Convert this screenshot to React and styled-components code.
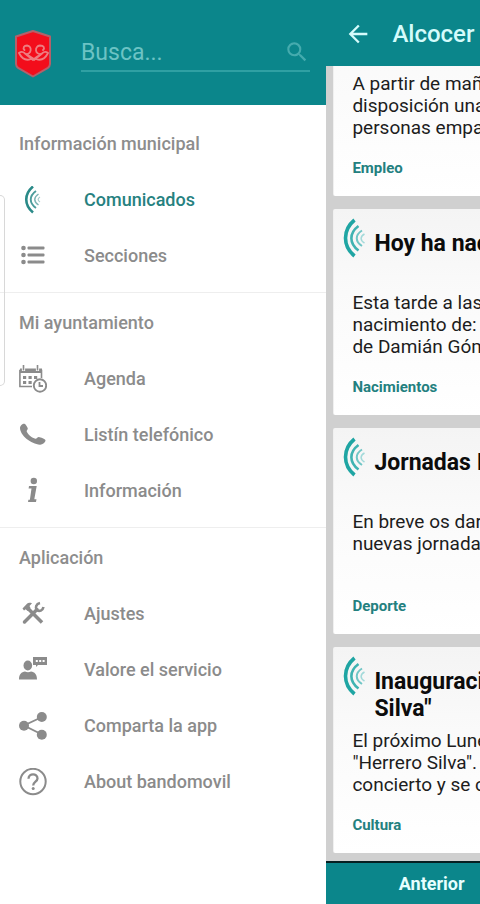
import React, { useState } from "react";
import styled, { createGlobalStyle, css } from "styled-components";
import { MdArrowBack, MdSearch } from "react-icons/md";

const TEAL = "#0b868b";

const menu = [
  {
    title: "Información municipal",
    items: [
      { label: "Comunicados", icon: MenuSignalIcon },
      { label: "Secciones", icon: ListIcon },
    ],
  },
  {
    title: "Mi ayuntamiento",
    items: [
      { label: "Agenda", icon: CalendarIcon },
      { label: "Listín telefónico", icon: PhoneIcon },
      { label: "Información", icon: InfoIcon },
    ],
  },
  {
    title: "Aplicación",
    items: [
      { label: "Ajustes", icon: ToolsIcon },
      { label: "Valore el servicio", icon: FeedbackIcon },
      { label: "Comparta la app", icon: ShareIcon },
      { label: "About bandomovil", icon: HelpIcon },
    ],
  },
];

const posts = [
  {
    body: "A partir de mañana\ndisposición una\npersonas empadronadas",
    tag: "Empleo",
  },
  {
    title: "Hoy ha nacido",
    body: "Esta tarde a las\nnacimiento de:\nde Damián Gómez",
    tag: "Nacimientos",
  },
  {
    title: "Jornadas Infantiles",
    body: "En breve os daremos\nnuevas jornadas",
    tag: "Deporte",
  },
  {
    title: 'Inauguración\nSilva"',
    body: 'El próximo Lunes\n"Herrero Silva".\nconcierto y se celebrará',
    tag: "Cultura",
  },
];

export default function App() {
  const [active, setActive] = useState("Comunicados");
  const [search, setSearch] = useState("");

  return (
    <Screen>
      <GlobalStyle />
      <Drawer>
        <DrawerHeader>
          <CrestIcon />
          <SearchField>
            <input
              type="text"
              aria-label="Busca"
              placeholder="Busca..."
              value={search}
              onChange={(e) => setSearch(e.target.value)}
            />
            <MdSearch size={26} />
          </SearchField>
        </DrawerHeader>
        <Menu>
          {menu.map((section) => (
            <Section key={section.title}>
              <SectionTitle>{section.title}</SectionTitle>
              {section.items.map(({ label, icon: Icon }) => (
                <MenuItem
                  key={label}
                  type="button"
                  $active={label === active}
                  onClick={() => setActive(label)}
                >
                  <Icon />
                  <MenuLabel>{label}</MenuLabel>
                </MenuItem>
              ))}
            </Section>
          ))}
        </Menu>
        <EdgeHandle />
      </Drawer>
      <Content>
        <AppBar>
          <BackButton type="button" aria-label="Volver">
            <MdArrowBack size={28} />
          </BackButton>
          <h1>Alcocer</h1>
        </AppBar>
        <Feed>
          {posts.map((post) => (
            <Card key={post.tag}>
              <CardHeader>
                {post.title && (
                  <>
                    <SignalIcon />
                    <h2>{post.title}</h2>
                  </>
                )}
              </CardHeader>
              <CardBody>{post.body}</CardBody>
              <Tag>{post.tag}</Tag>
            </Card>
          ))}
        </Feed>
        <Pager>
          <button type="button">Anterior</button>
        </Pager>
      </Content>
    </Screen>
  );
}

function CrestIcon() {
  return (
    <svg width="38" height="50" viewBox="0 0 38 50" fill="none">
      <path
        d="M19 3 36 8.500V36c0 2-1 3-2.500 4.200L19 48.500 4.500 40.200C3 39 2 38 2 36V8.500z"
        fill="#f30d1b"
        stroke="#b5606a"
        strokeWidth="2"
        strokeLinejoin="round"
      />
      <g stroke="#ee7c80" strokeWidth="1.800" strokeLinecap="round">
        <path d="M20 31C17 29 14 27 12 26C17 27 19 18 13 17.500C10 17.500 8.500 20 10.500 22" />
        <path d="M20 31C23 29 26 27 27 26C21 27 20 18 26 17.500C30 17.500 31 20 29 22" />
        <path d="M17 31C12 33 8 31 5 25C7 23.500 9.500 24 11 25.500L19 32" />
        <path d="M22 31C27 33 31 31 34 25C32 23.500 29.500 24 28 25.500L20 32" />
      </g>
    </svg>
  );
}

function SignalIcon() {
  return (
    <svg width="24" height="40" viewBox="0 0 24 40" fill="none">
      <path d="M12.500 2C.500 12 .500 28 12.500 38" stroke="#1fa5a3" strokeWidth="3.600" />
      <path d="M16.500 8C7 15 7 25.500 16.500 32.500" stroke="#3fb3b2" strokeWidth="2.600" />
      <path d="M20 12.500C13 17 13 23.500 20 28" stroke="#70c6c6" strokeWidth="2" />
      <path d="M22.500 16C18 18.500 18 22.500 22.500 25" stroke="#a3dada" strokeWidth="1.500" />
    </svg>
  );
}

function MenuSignalIcon() {
  return (
    <svg width="28" height="28" viewBox="0 0 28 28" fill="none">
      <path d="M14 .500C5 8 5 19 14 26.500" stroke="#2a8a88" strokeWidth="2.600" />
      <path d="M17 5C10 10 10 17 17 22" stroke="#4b9c9b" strokeWidth="1.900" />
      <path d="M19.500 8C14.500 11.500 14.500 15.500 19.500 19" stroke="#7fb5b5" strokeWidth="1.500" />
      <path d="M21 11C18.500 12.500 18.500 14.500 21 16" stroke="#a9cccc" strokeWidth="1.200" />
    </svg>
  );
}

function ListIcon() {
  return (
    <svg width="28" height="28" viewBox="0 0 28 28" fill="currentColor">
      {[6, 13, 20].map((y) => (
        <g key={y}>
          <circle cx="4.500" cy={y} r="2.300" />
          <rect x="8.500" y={y - 1.5} width="17" height="3" rx="1" />
        </g>
      ))}
    </svg>
  );
}

function CalendarIcon() {
  return (
    <svg width="28" height="28" viewBox="0 0 28 28" fill="none" stroke="currentColor">
      <path d="M13 21.500H.900V5.500H22.500V13" strokeWidth="1.600" />
      <path d="M1 3.500h22V8H1z" fill="currentColor" stroke="none" />
      <path d="M4.500 0v6M18.500 0v6" stroke="#fff" strokeWidth="3.200" />
      <path d="M4.500 0v5.500M18.500 0v5.500" strokeWidth="1.600" />
      <path
        d="M4 11h3.200v3H4zM9.500 11h3.200v3H9.500zM15 11h3.200v3H15zM4 16h3.200v3H4zM9.500 16h3.200v3H9.500z"
        fill="currentColor"
        stroke="none"
      />
      <circle cx="21" cy="20.500" r="6.200" fill="#fff" strokeWidth="1.900" />
      <path d="M20.500 17v4h3.500" strokeWidth="1.800" />
    </svg>
  );
}

function PhoneIcon() {
  return (
    <svg width="28" height="28" viewBox="0 0 28 28" fill="currentColor">
      <path d="M1 7C1 4.500 3.500 2.500 5.500 2.700C6.300 2.800 8.700 6.300 8.800 7.500C8.900 8.500 7.400 9.500 7.700 10.600C8.700 13.500 13.300 17.200 16.400 17.800C17.800 18 18.600 16 19.900 16.100C21.500 16.300 26.300 18.300 26.500 19.300C26.600 21.300 23.500 23.800 21 23.700C12 23 1.200 14.500 1 7z" />
    </svg>
  );
}

function InfoIcon() {
  return (
    <svg width="28" height="28" viewBox="0 0 28 28" fill="currentColor">
      <circle cx="14.800" cy="4" r="3.200" />
      <path d="M10 9h7.700L15.300 22.300h2.200L17 25H9l.400-2.300h1.500L12.500 11.500H9.600z" />
    </svg>
  );
}

function ToolsIcon() {
  return (
    <svg width="28" height="28" viewBox="0 0 28 28" fill="none" stroke="currentColor">
      <path d="M5.500 22 18 9.500" strokeWidth="3.500" strokeLinecap="round" />
      <path d="M21 3C17 4 16 7.500 17.800 10C20.500 12 23.700 10.500 24.500 7" strokeWidth="2.600" />
      <path d="M8.500 8 23 22.500" strokeWidth="3.500" />
      <path
        d="M3.500 8.500 8 3.800C9 2.800 10.500 2.500 13 3.300L10.500 6 11.500 8 8.500 11 6.800 9.200 5 10.500z"
        fill="currentColor"
        stroke="none"
      />
    </svg>
  );
}

function FeedbackIcon() {
  return (
    <svg width="28" height="28" viewBox="0 0 28 28" fill="currentColor">
      <ellipse cx="8.800" cy="9.500" rx="4.300" ry="5" />
      <path d="M0 23.500C0 18 2.500 16 6 15.500Q9 17 12 15.500C15.500 16 18 18 18 23.500z" />
      <path d="M14 1h14v8h-9l-2 2v-2h-3z" />
      <path
        d="M16.800 4h2v2h-2zM20.200 4h2v2h-2zM23.600 4h2v2h-2z"
        fill="#fff"
      />
    </svg>
  );
}

function ShareIcon() {
  return (
    <svg width="28" height="28" viewBox="0 0 28 28" fill="currentColor">
      <path d="M23 5 5 13.500 23 22.500" fill="none" stroke="currentColor" strokeWidth="1.900" />
      <circle cx="22.800" cy="5" r="5" />
      <circle cx="5" cy="13.700" r="5" />
      <circle cx="22.800" cy="22.700" r="5" />
    </svg>
  );
}

function HelpIcon() {
  return (
    <svg width="28" height="28" viewBox="0 0 28 28" fill="none" stroke="currentColor">
      <circle cx="14" cy="13.500" r="12.700" strokeWidth="2" />
      <path
        d="M9.500 10.800C9.700 4.800 18.500 5 18.500 10.500C18.500 13.500 14.200 14 14.200 17.500"
        strokeWidth="2.300"
      />
      <circle cx="14.200" cy="20.500" r="1.500" fill="currentColor" stroke="none" />
    </svg>
  );
}

const GlobalStyle = createGlobalStyle`
  * {
    box-sizing: border-box;
  }
  body {
    margin: 0;
    font-family: Roboto, "Liberation Sans", sans-serif;
    background: #fff;
  }
  button {
    border: 0;
    padding: 0;
    background: none;
    font-family: inherit;
    cursor: pointer;
  }
  h1, h2, p {
    margin: 0;
  }
  svg {
    flex-shrink: 0;
  }
`;

const Screen = styled.div`
  display: grid;
  grid-template-columns: 68% 32%;
  height: 100vh;
  overflow: hidden;
`;

const Drawer = styled.aside`
  position: relative;
  background: #fff;
  min-width: 0;
`;

const DrawerHeader = styled.header`
  display: flex;
  align-items: center;
  gap: 29px;
  height: 105px;
  padding: 0 16px 0 14px;
  background: ${TEAL};
`;

const SearchField = styled.label`
  display: flex;
  align-items: center;
  flex: 1;
  min-width: 0;
  height: 38px;
  border-bottom: 2px solid #2fa0a3;
  color: #45abae;
  input {
    flex: 1;
    min-width: 0;
    padding: 2px 0 0;
    border: 0;
    outline: 0;
    background: none;
    font: 400 23px Roboto, sans-serif;
    color: #fff;
  }
  input::placeholder {
    color: #6cc3c4;
    opacity: 1;
  }
`;

const Menu = styled.nav`
  padding-top: 9px;
`;

const Section = styled.section`
  display: flex;
  flex-direction: column;
  padding: 2px 0 8px;
  & + & {
    border-top: 1px solid #eeeeee;
  }
`;

const SectionTitle = styled.h2`
  padding-left: 19px;
  font-weight: 500;
  font-size: 18px;
  line-height: 56px;
  color: #8d8d8d;
`;

const MenuItem = styled.button`
  display: flex;
  align-items: center;
  gap: 37px;
  height: 56px;
  padding-left: 19px;
  font-weight: 500;
  font-size: 18px;
  text-align: left;
  color: #8b8b8b;
  ${(props) =>
    props.$active &&
    css`
      color: #26817f;
    `}
`;

const MenuLabel = styled.span`
  padding-bottom: 2px;
`;

/* pull tab of the system edge panel, lies over the drawer */
const EdgeHandle = styled.div`
  position: absolute;
  top: 195px;
  left: 0;
  width: 5px;
  height: 191px;
  border: 1px solid #d8d8d8;
  border-left: 0;
  border-radius: 0 6px 6px 0;
`;

const Content = styled.main`
  display: flex;
  flex-direction: column;
  min-width: 0;
  height: 100vh;
  overflow: hidden;
`;

const AppBar = styled.header`
  display: flex;
  align-items: center;
  gap: 20px;
  flex-shrink: 0;
  height: 66px;
  padding: 2px 0 0 18px;
  background: ${TEAL};
  h1 {
    font-weight: 500;
    font-size: 24px;
    color: #d5fbfb;
  }
`;

const BackButton = styled.button`
  display: flex;
  color: #d5fbfb;
`;

const Feed = styled.div`
  display: flex;
  flex-direction: column;
  justify-content: flex-end;
  gap: 13px;
  flex: 1;
  min-height: 0;
  padding: 0 0 8px 7px;
  overflow: hidden;
  background: #d0d0d0;
`;

const Card = styled.article`
  flex-shrink: 0;
  height: 206px;
  overflow: hidden;
  border-left: 1px solid #f0f0f0;
  border-radius: 2px 0 0 2px;
  background: linear-gradient(#f4f4f4, #fafafa 40%, #fff);
`;

const CardHeader = styled.div`
  display: flex;
  gap: 8px;
  height: 83px;
  padding: 9px 0 0 8px;
  h2 {
    padding-top: 12px;
    font-weight: 700;
    font-size: 23px;
    line-height: 27px;
    white-space: pre;
    color: #0c0c0c;
  }
`;

const CardBody = styled.p`
  min-height: 66px;
  padding-left: 18px;
  font-size: 19px;
  line-height: 22px;
  white-space: pre;
  color: #1d1d1d;
`;

const Tag = styled.p`
  padding: 18px 0 0 18px;
  font-weight: 700;
  font-size: 15px;
  line-height: 22px;
  color: #23807f;
`;

const Pager = styled.footer`
  display: flex;
  justify-content: center;
  flex-shrink: 0;
  height: 43px;
  border-top: 2px solid #062022;
  background: ${TEAL};
  button {
    padding-left: 57px;
    font-weight: 700;
    font-size: 18px;
    color: #e6ffff;
  }
`;
